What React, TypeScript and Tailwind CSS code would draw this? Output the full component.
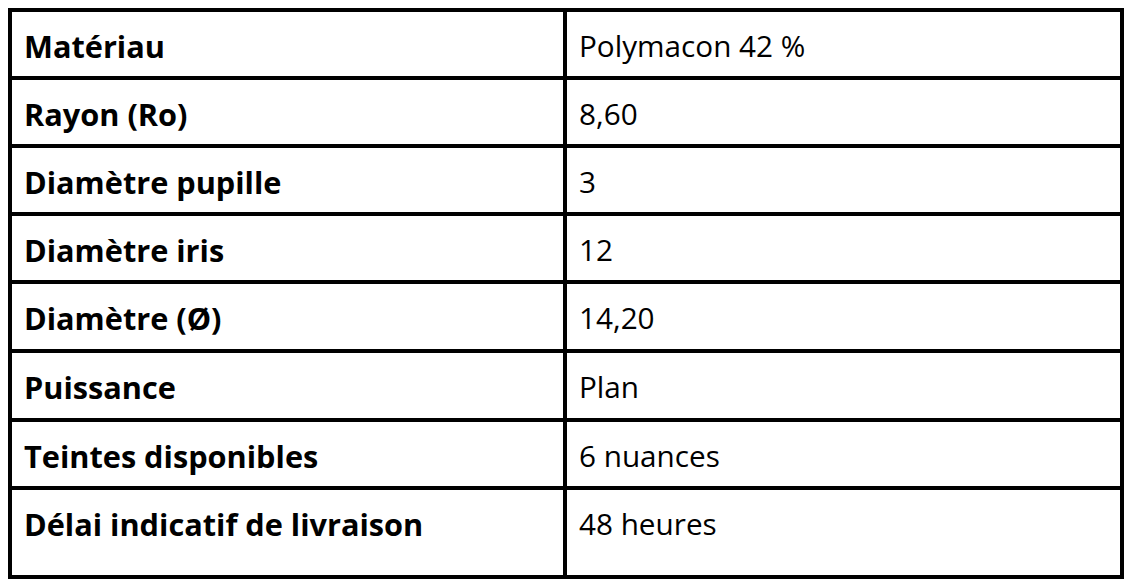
const rows = [
  { label: "Matériau", value: "Polymacon 42 %", h: "h-[64px]" },
  { label: "Rayon (Ro)", value: "8,60", h: "h-[68px]" },
  { label: "Diamètre pupille", value: "3", h: "h-[68px]" },
  { label: "Diamètre iris", value: "12", h: "h-[68px]" },
  { label: "Diamètre (Ø)", value: "14,20", h: "h-[69px]" },
  { label: "Puissance", value: "Plan", h: "h-[69px]" },
  { label: "Teintes disponibles", value: "6 nuances", h: "h-[68px]" },
  { label: "Délai indicatif de livraison", value: "48 heures", h: "h-[89px]" },
];

export default function App() {
  return (
    <div className="w-[1134px] h-[588px] bg-white p-2 font-['Open_Sans',sans-serif] text-black">
      <div className="w-[1116px] border-4 border-black">
        {rows.map((row, i) => (
          <div
            key={row.label}
            className={`grid grid-cols-[555px_1fr] ${row.h} ${i > 0 ? "border-t-4 border-black" : ""}`}
          >
            <div className="border-r-4 border-black pl-[12px] pt-[14px] text-[30.7px] leading-[40px] font-bold">
              {row.label}
            </div>
            <div className="pl-[12px] pt-[14px] text-[29.7px] leading-[40px]">{row.value}</div>
          </div>
        ))}
      </div>
    </div>
  );
}
